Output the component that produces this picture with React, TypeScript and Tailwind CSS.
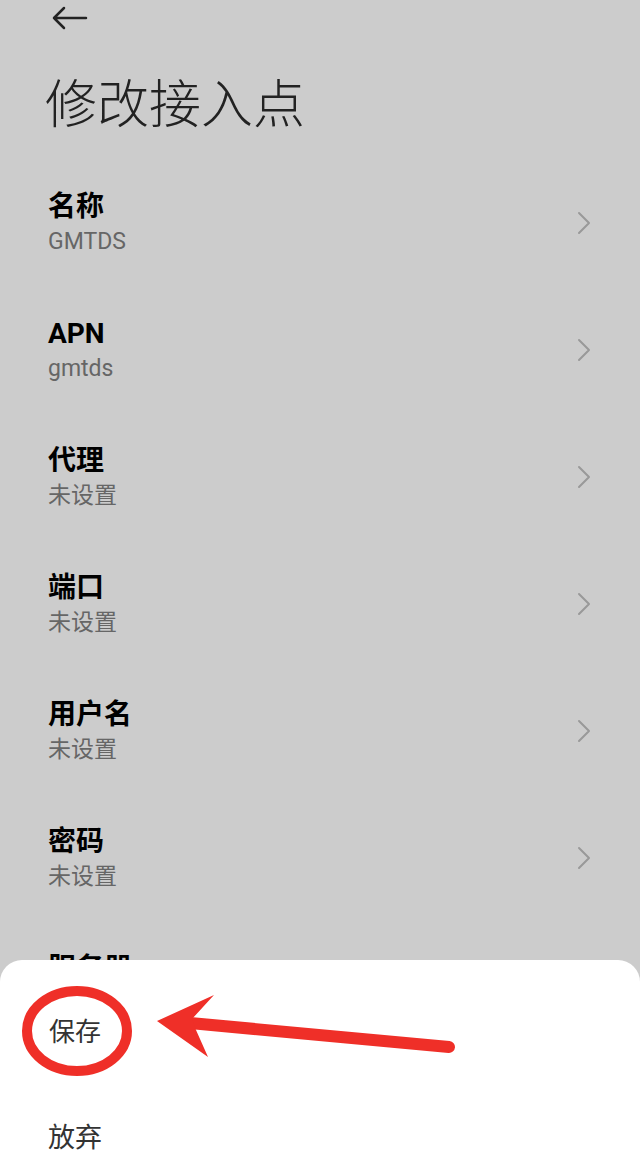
import React from "react";

const ITEMS = [
  { title: "名称", value: "GMTDS" },
  { title: "APN", value: "gmtds" },
  { title: "代理", value: "未设置" },
  { title: "端口", value: "未设置" },
  { title: "用户名", value: "未设置" },
  { title: "密码", value: "未设置" },
  { title: "服务器", value: "未设置" },
];

function Chevron() {
  return (
    <svg width="14" height="24" viewBox="0 0 14 24" fill="none" className="shrink-0 -mt-[2px]">
      <path d="M2 2 L12 12 L2 22" stroke="#999999" strokeWidth="2" strokeLinecap="round" strokeLinejoin="round" />
    </svg>
  );
}

export default function App() {
  return (
    <div className="relative h-[1172px] w-[640px] overflow-hidden bg-[#cccccc] font-['Roboto','Noto_Sans_CJK_SC',sans-serif]">
      {/* Header */}
      <div className="flex h-[36px] items-center pl-[52px]">
        <svg width="36" height="24" viewBox="0 0 36 24" fill="none">
          <path d="M2 12 H34 M12 2 L2 12 L12 22" stroke="#222222" strokeWidth="2.5" strokeLinecap="round" strokeLinejoin="round" />
        </svg>
      </div>
      <div className="h-[124px] pl-[45px] pt-[40px]">
        <h1 className="text-[52px] leading-[60px] font-light text-[#222222]">修改接入点</h1>
      </div>

      {/* List */}
      <div className="flex flex-col">
        {ITEMS.map((item) => (
          <div key={item.title} className="flex h-[127px] items-center justify-between pl-[48px] pr-[49px]">
            <div className="flex flex-col">
              <span className="text-[28px] leading-[36px] font-bold text-black">{item.title}</span>
              <span className="text-[23px] leading-[34px] text-[#666666]">{item.value}</span>
            </div>
            <Chevron />
          </div>
        ))}
      </div>

      {/* Bottom sheet */}
      <div className="absolute bottom-0 left-0 right-0 h-[212px] overflow-hidden rounded-t-[22px] bg-white pt-[19px]">
        <div className="flex h-[106px] items-center pl-[49px] text-[26px] text-[#333333]">保存</div>
        <div className="flex h-[106px] items-center pl-[48px] text-[27px] text-[#333333]">放弃</div>
      </div>

      {/* Annotation */}
      <svg className="pointer-events-none absolute left-0 top-0" width="640" height="1172" viewBox="0 0 640 1172">
        <ellipse cx="77" cy="1031" rx="50" ry="40" fill="none" stroke="#ef2f28" strokeWidth="10" />
        <line x1="190" y1="1023" x2="449" y2="1047" stroke="#ef2f28" strokeWidth="12" strokeLinecap="round" />
        <polygon points="157,1021 214,995 192,1019 196,1030 208,1057" fill="#ef2f28" />
      </svg>
    </div>
  );
}
